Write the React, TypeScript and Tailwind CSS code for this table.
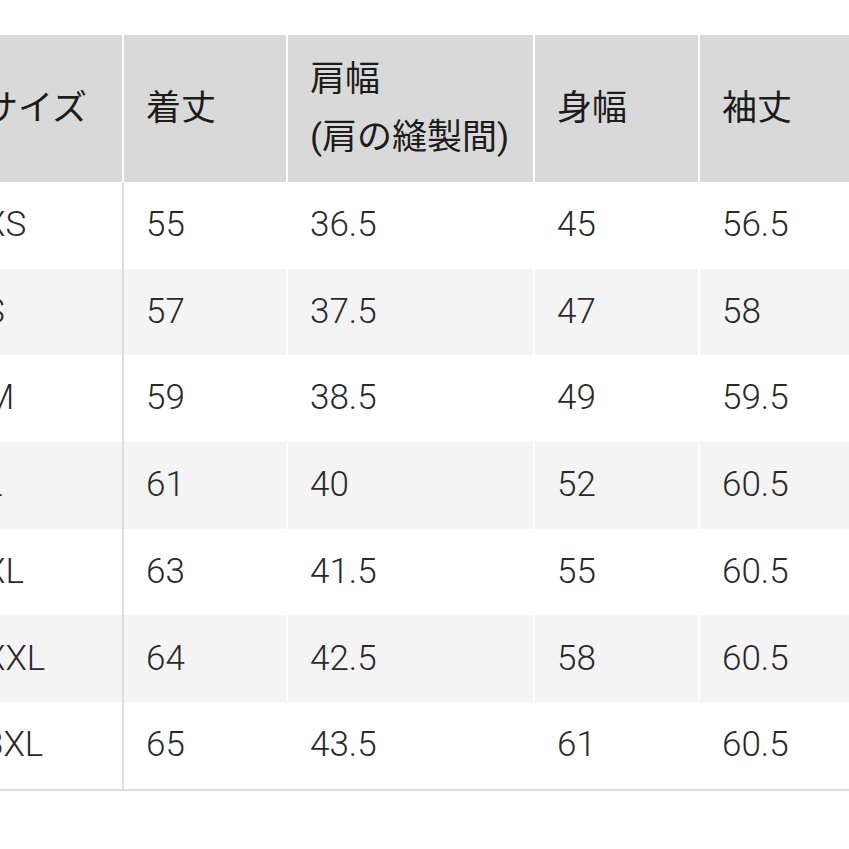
import React from "react";

const rows: string[][] = [
  ["XS", "55", "36.5", "45", "56.5"],
  ["S", "57", "37.5", "47", "58"],
  ["M", "59", "38.5", "49", "59.5"],
  ["L", "61", "40", "52", "60.5"],
  ["XL", "63", "41.5", "55", "60.5"],
  ["XXL", "64", "42.5", "58", "60.5"],
  ["3XL", "65", "43.5", "61", "60.5"],
];

const font = { fontFamily: 'Roboto, "Noto Sans CJK JP", sans-serif' };

export default function App() {
  return (
    <div className="w-[849px] h-[849px] overflow-hidden bg-white" style={font}>
      <div className="ml-[-37px] mt-[35px] w-[900px] grid grid-cols-[159px_164px_247px_165px_165px]">
        {/* header */}
        <div className="h-[147px] bg-[#d9d9d9] flex items-center pl-[20px] text-[35px] leading-[58px] text-[#1c1c1c]">サイズ</div>
        <div className="h-[147px] bg-[#d9d9d9] border-l-2 border-white flex items-center pl-[22px] text-[35px] leading-[58px] text-[#1c1c1c]">着丈</div>
        <div className="h-[147px] bg-[#d9d9d9] border-l-2 border-white flex items-center pl-[22px] text-[35px] leading-[58px] text-[#1c1c1c]">
          <div>
            <div>肩幅</div>
            <div>(肩の縫製間)</div>
          </div>
        </div>
        <div className="h-[147px] bg-[#d9d9d9] border-l-2 border-white flex items-center pl-[22px] text-[35px] leading-[58px] text-[#1c1c1c]">身幅</div>
        <div className="h-[147px] bg-[#d9d9d9] border-l-2 border-white flex items-center pl-[22px] text-[35px] leading-[58px] text-[#1c1c1c]">袖丈</div>

        {/* body */}
        {rows.map((r, i) => {
          const bg = i % 2 === 1 ? "bg-[#f4f4f4]" : "bg-white";
          return (
            <React.Fragment key={i}>
              <div className={`h-[86.7px] ${bg} flex items-center pl-[21px] text-[35px] font-light text-[#2a2a2a]`}>{r[0]}</div>
              <div className={`h-[86.7px] ${bg} border-l-2 border-[#dedede] flex items-center pl-[22px] text-[35px] font-light text-[#2a2a2a]`}>{r[1]}</div>
              <div className={`h-[86.7px] ${bg} border-l-2 border-white flex items-center pl-[22px] text-[35px] font-light text-[#2a2a2a]`}>{r[2]}</div>
              <div className={`h-[86.7px] ${bg} border-l-2 border-white flex items-center pl-[22px] text-[35px] font-light text-[#2a2a2a]`}>{r[3]}</div>
              <div className={`h-[86.7px] ${bg} border-l-2 border-white flex items-center pl-[22px] text-[35px] font-light text-[#2a2a2a]`}>{r[4]}</div>
            </React.Fragment>
          );
        })}
        <div className="col-span-5 h-[2px] bg-[#dedede]"></div>
      </div>
    </div>
  );
}
